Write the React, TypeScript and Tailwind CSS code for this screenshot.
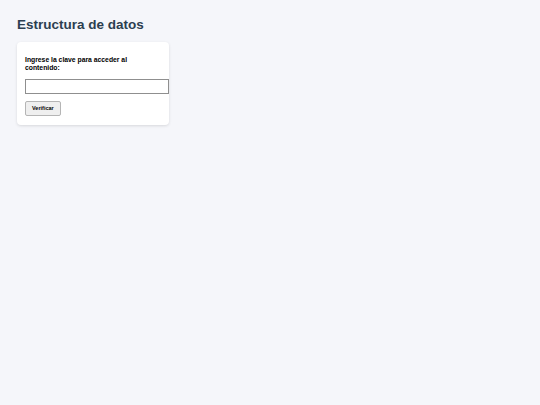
export default function App() {
  return (
    <div className="min-h-[405px] bg-[#f5f6fa] px-[17px] pt-[16px] font-['Liberation_Sans',Arial,sans-serif]">
      <h1 className="text-[13.5px] font-bold leading-[17px] text-[#2c3e50]">Estructura de datos</h1>
      <div className="mt-[9px] w-[152px] rounded-[4px] bg-white px-[8px] pb-[9px] pt-[14px] shadow-[0_1px_3px_rgba(0,0,0,0.12)]">
        <p className="w-[124px] text-[6.8px] font-bold leading-[8px] text-black">
          Ingrese la clave para acceder al contenido:
        </p>
        <input
          type="password"
          className="mt-[7px] box-content block h-[13px] w-[142px] border border-[#8f8f8f] bg-white px-0 outline-none"
        />
        <button className="mt-[7px] block h-[15px] rounded-[2px] border border-[#b5b5b5] bg-[#efefef] px-[6px] text-[5.5px] font-bold leading-none text-black">
          Verificar
        </button>
      </div>
    </div>
  );
}
